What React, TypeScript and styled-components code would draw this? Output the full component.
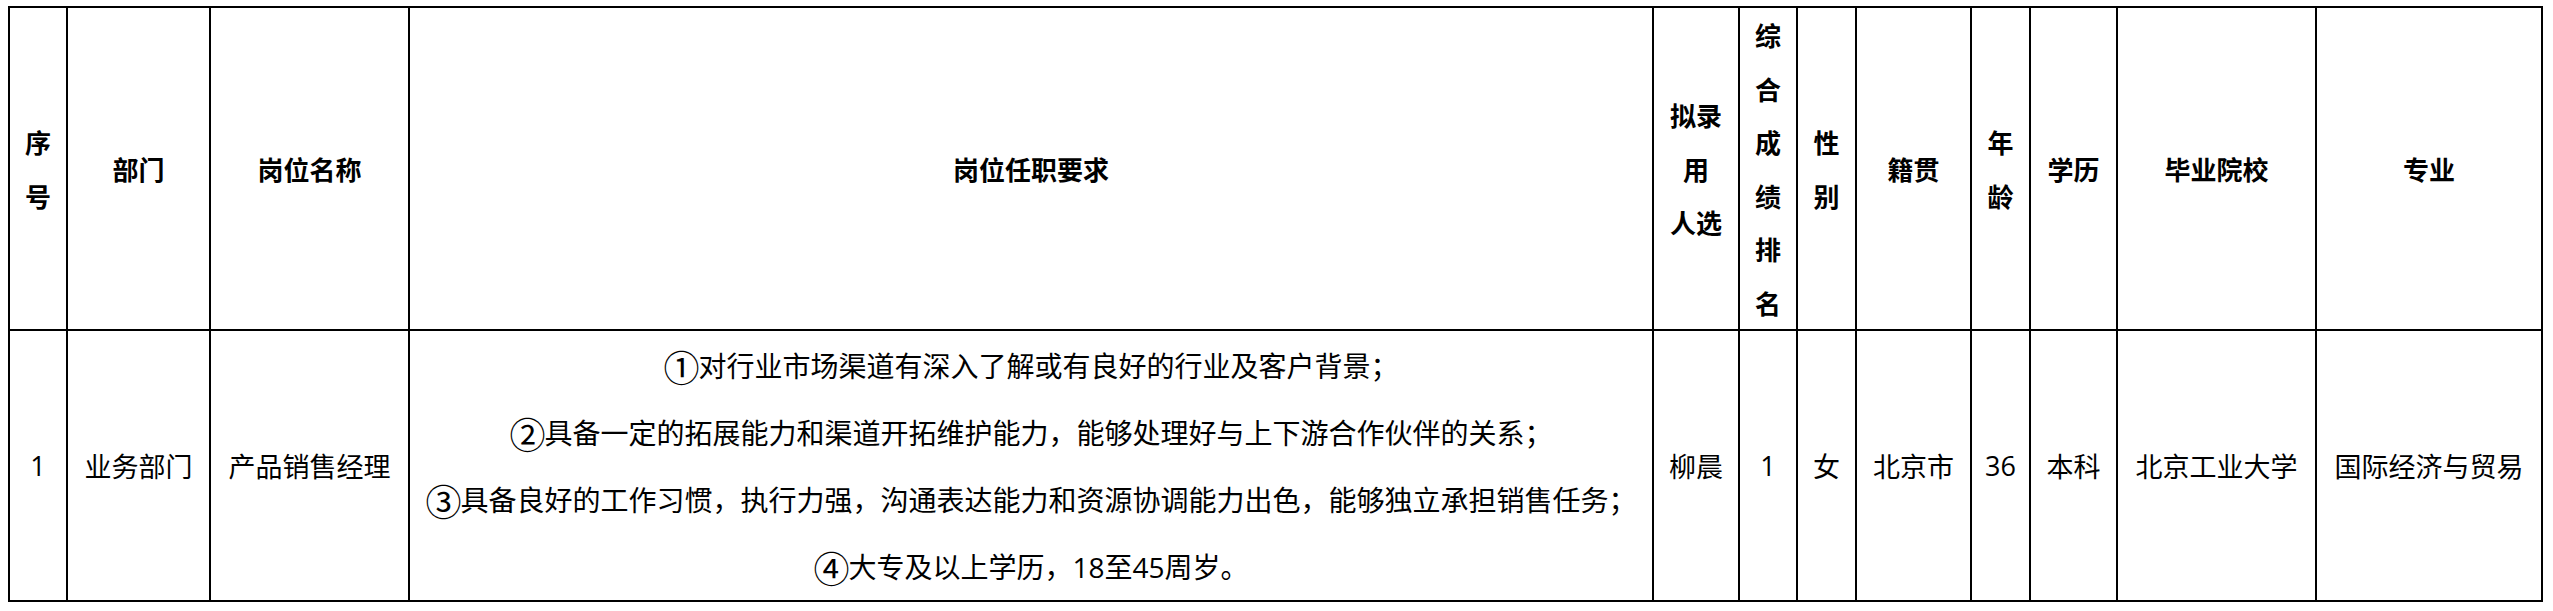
import React from "react";
import styled, { createGlobalStyle } from "styled-components";

const Global = createGlobalStyle`
  html, body { margin: 0; padding: 0; background: #ffffff; }
  body { font-family: "Noto Sans CJK SC", "Noto Sans", sans-serif; color: #000; }
`;

const Page = styled.div`
  padding: 6px 0 0 8px;
`;

const Table = styled.table`
  border-collapse: collapse;
  table-layout: fixed;
  width: 2535px;
`;

const HeadRow = styled.tr`
  height: 322px;
`;

const BodyRow = styled.tr`
  height: 271px;
`;

const HeadCell = styled.th`
  border: 2px solid #000;
  padding: 0 2px;
  text-align: center;
  vertical-align: middle;
  font-family: "Noto Sans CJK SC", sans-serif;
  font-weight: 700;
  font-size: 26px;
  line-height: 53.5px;
  color: #000;
`;

const Cell = styled.td<{ $latin?: boolean }>`
  border: 2px solid #000;
  padding: 0 2px;
  text-align: center;
  vertical-align: middle;
  font-family: ${(p) =>
    p.$latin
      ? `"Open Sans", "Noto Sans", sans-serif`
      : `"Noto Sans CJK SC", sans-serif`};
  font-weight: 400;
  font-size: 27px;
  line-height: 40px;
  white-space: nowrap;
  color: #000;
`;

const ReqCell = styled.td`
  border: 2px solid #000;
  padding: 0;
  text-align: center;
  vertical-align: middle;
  font-family: "Noto Sans CJK SC", sans-serif;
  font-size: 28px;
  color: #000;
`;

const ReqLine = styled.div`
  height: 67px;
  line-height: 67px;
  white-space: nowrap;
`;

const Num = styled.span`
  font-family: "Open Sans", "Noto Sans", sans-serif;
`;

const Circ = styled.span`
  display: inline-block;
  font-size: 36px;
  line-height: 1;
  vertical-align: -5px;
  margin-right: -1px;
`;

const cols = [58, 143, 199, 1244, 86, 58, 59, 115, 59, 87, 199, 226];

const headers: string[][] = [
  ["序", "号"],
  ["部门"],
  ["岗位名称"],
  ["岗位任职要求"],
  ["拟录", "用", "人选"],
  ["综", "合", "成", "绩", "排", "名"],
  ["性", "别"],
  ["籍贯"],
  ["年", "龄"],
  ["学历"],
  ["毕业院校"],
  ["专业"],
];

export default function App() {
  return (
    <Page>
      <Global />
      <Table>
        <colgroup>
          {cols.map((w, i) => (
            <col key={i} style={{ width: w }} />
          ))}
        </colgroup>
        <thead>
          <HeadRow>
            {headers.map((lines, i) => (
              <HeadCell key={i}>
                {lines.map((l, j) => (
                  <div key={j}>{l}</div>
                ))}
              </HeadCell>
            ))}
          </HeadRow>
        </thead>
        <tbody>
          <BodyRow>
            <Cell $latin>1</Cell>
            <Cell>业务部门</Cell>
            <Cell>产品销售经理</Cell>
            <ReqCell>
              <ReqLine>
                <Circ>①</Circ>对行业市场渠道有深入了解或有良好的行业及客户背景；
              </ReqLine>
              <ReqLine>
                <Circ>②</Circ>具备一定的拓展能力和渠道开拓维护能力，能够处理好与上下游合作伙伴的关系；
              </ReqLine>
              <ReqLine>
                <Circ>③</Circ>具备良好的工作习惯，执行力强，沟通表达能力和资源协调能力出色，能够独立承担销售任务；
              </ReqLine>
              <ReqLine>
                <Circ>④</Circ>大专及以上学历，<Num>18</Num>至<Num>45</Num>周岁。
              </ReqLine>
            </ReqCell>
            <Cell>柳晨</Cell>
            <Cell $latin>1</Cell>
            <Cell>女</Cell>
            <Cell>北京市</Cell>
            <Cell $latin>36</Cell>
            <Cell>本科</Cell>
            <Cell>北京工业大学</Cell>
            <Cell>国际经济与贸易</Cell>
          </BodyRow>
        </tbody>
      </Table>
    </Page>
  );
}
